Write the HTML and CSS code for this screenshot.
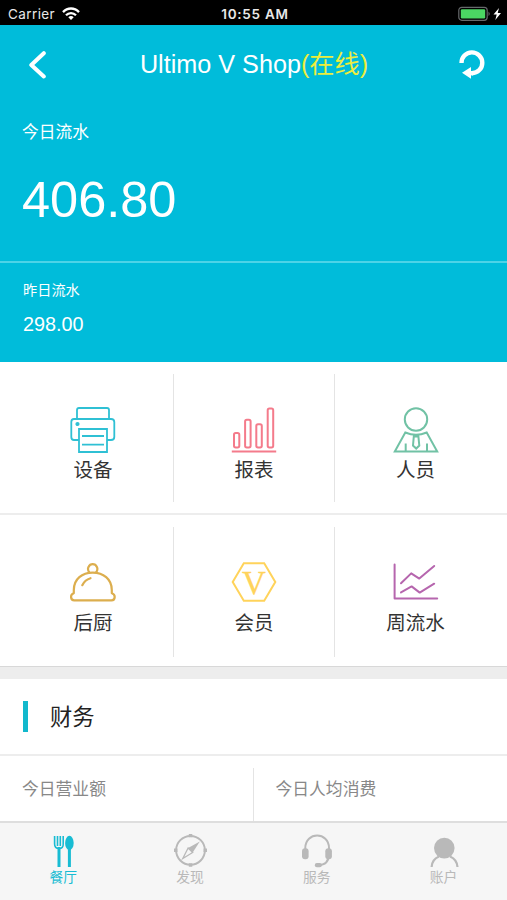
FILE: index.html
```html
<!DOCTYPE html>
<html lang="zh-CN">
<head>
<meta charset="utf-8">
<title>Ultimo V Shop</title>
<link rel="stylesheet" href="styles.css">
</head>
<body>
<div class="app">
  <div class="status">
    <div class="carrier"><span>Carrier</span>
      <svg width="18" height="13" viewBox="0 0 18 13" fill="none" stroke="#fff" stroke-width="2.3"><path d="M1 5.1C5.5.3 12.5.3 17 5.1M4 8.2C6.8 5.3 11.2 5.3 14 8.2"/><path d="M6.3 10.3Q9 7.9 11.7 10.3L9 13Z" fill="#fff" stroke="none"/></svg>
    </div>
    <div class="clock">10:55 AM</div>
    <div class="power">
      <svg width="44" height="16" viewBox="0 0 44 16"><rect x=".8" y="1.3" width="28.4" height="13" rx="3" fill="none" stroke="#66696b" stroke-width="1.2"/><rect x="2.8" y="3.2" width="24.4" height="9.2" rx="1.2" fill="#4bd763"/><path d="M30.5 5.5Q33 7.8 30.5 10Z" fill="#66696b"/><path d="M41 2L35.5 8.5H38.7L37.3 14L43 7H39.7Z" fill="#fff"/></svg>
    </div>
  </div>
  <header class="nav">
    <svg class="back" width="20" height="30" viewBox="0 0 20 30" fill="none" stroke="#fff" stroke-width="4" stroke-linecap="round" stroke-linejoin="round"><path d="M16.8 4.2L4.3 16L16.8 27.5"/></svg>
    <h1>Ultimo V Shop<span>(在线)</span></h1>
    <svg class="refresh" width="28" height="30" viewBox="0 0 28 30"><path d="M3.5 14A10.4 10.4 0 1 1 14 24.2" fill="none" stroke="#fff" stroke-width="4.4"/><path d="M4 23.7L13 18V29.8Z" fill="#fff"/><path d="M12 22H15V26.4H12Z" fill="#fff"/></svg>
  </header>
  <section class="today"><p>今日流水</p><strong>406.80</strong></section>
  <section class="yesterday"><p>昨日流水</p><strong>298.00</strong></section>
  <section class="menu">
    <div class="menu-row">
      <div class="tile"><svg viewBox="0 0 46 46" stroke="#2fc0d4" stroke-width="1.8"><path d="M7 12V3Q7 1 9 1H37Q39 1 39 3V12M9 33H4Q1.3 33 1.3 30V15Q1.3 12 4 12H41Q44.3 12 44.3 15V30Q44.3 33 41 33H37M9 22H37V45H9ZM12 29H34M12 37.6H34"/><circle cx="7.5" cy="17" r="1.2" fill="#2fc0d4"/></svg><span>设备</span></div>
      <div class="tile"><svg viewBox="0 0 46 46" stroke="#f47b8b" stroke-width="2"><rect x="3" y="26" width="5.3" height="14.4" rx="1.7"/><rect x="14.1" y="12.7" width="5.5" height="27.7" rx="1.7"/><rect x="25.3" y="17.2" width="5.5" height="23.2" rx="1.7"/><rect x="36.7" y="1.6" width="5.5" height="38.8" rx="1.7"/><path d="M.8 44.4H45.2"/></svg><span>报表</span></div>
      <div class="tile"><svg viewBox="0 0 46 46" stroke="#71c2a5" stroke-width="2"><circle cx="23" cy="12.5" r="11.2"/><path d="M12.3 25.5Q23 30 33.7 25.5L44.2 44.4H1.8ZM12.7 36.5V44M34 36.5V44M20.8 29.5H25.4L26.3 38.5L23.2 41.5L20 38.5Z"/></svg><span>人员</span></div>
    </div>
    <div class="menu-row">
      <div class="tile"><svg viewBox="0 0 46 46" stroke="#dcae4e" stroke-width="2.2"><path d="M19.4 12.5C16.3 8.8 19 4.2 22.7 4.2S29.1 8.8 26 12.5M3.8 33V30C3.8 18.8 12.3 12.6 22.7 12.6S41.8 18.8 41.8 30V33M3.8 33.2C0 34.2.2 40.3 4.2 40.3H41.5C45.6 40.3 45.8 34.2 41.8 33.2M12.3 25.2Q14.8 19.8 20.5 18.2" stroke-linecap="round"/></svg><span>后厨</span></div>
      <div class="tile"><svg viewBox="0 0 46 46" stroke="#ffd35b" stroke-width="2"><path d="M12.8 3.2H33.2L44.3 22L33.2 40.8H12.8L1.7 22Z"/><text x="23" y="34">V</text></svg><span>会员</span></div>
      <div class="tile"><svg viewBox="0 0 46 46" stroke="#b666ae" stroke-width="2" stroke-linecap="round" stroke-linejoin="round"><path d="M1.6 4.5V38.5H44.2M8 23.3L18.2 13.4L26.3 18.6L41.2 6M8 32.4L18.6 26.4L26.7 32.6L41.2 23.7"/></svg><span>周流水</span></div>
    </div>
  </section>
  <section class="finance">
    <h2><span>财务</span></h2>
    <div class="figures"><div>今日营业额</div><div>今日人均消费</div></div>
  </section>
  <nav class="tabs">
    <div class="tab active"><svg viewBox="0 0 34 34"><path d="M8.6 2V10Q8.6 14.5 13 14.5T17.2 10V2M11.5 2V12M14.3 2V12" fill="none" stroke="currentColor" stroke-width="1.6"/><path d="M11.5 13H14.5V33H11.5ZM21.9 14H24.9V33H21.9Z"/><ellipse cx="23.4" cy="9" rx="4.3" ry="7.2"/></svg><span>餐厅</span></div>
    <div class="tab"><svg viewBox="0 0 34 34"><circle cx="17.5" cy="16.3" r="14.4" fill="none" stroke="currentColor" stroke-width="2"/><path d="M15.8 0H19.3V3.3H15.8ZM15.8 29.3H19.3V32.8H15.8ZM1 14.6H4.5V18.1H1ZM30.5 14.6H34V18.1H30.5Z"/><path d="M26.8 7.6L19.7 18.5L15.1 14Z"/><path d="M15.1 14L19.7 18.5L9.8 24.5Z" fill="none" stroke="currentColor" stroke-width="1.3"/></svg><span>发现</span></div>
    <div class="tab"><svg viewBox="0 0 34 34"><path d="M5.3 16V14C5.3-2.6 29-2.6 29 14V20Q29 31 18 31.2" fill="none" stroke="currentColor" stroke-width="2"/><rect x="2" y="14.3" width="6.6" height="11" rx="3"/><rect x="25.3" y="14.3" width="6.6" height="11" rx="3"/><rect x="14.8" y="29" width="7" height="4.2" rx="2"/></svg><span>服务</span></div>
    <div class="tab"><svg viewBox="0 0 34 34"><circle cx="17.3" cy="14.1" r="10.3"/><path d="M4.6 33Q5 25.5 12 22.5M30.5 33Q30 25.5 23 22.5" fill="none" stroke="currentColor" stroke-width="2.2"/></svg><span>账户</span></div>
  </nav>
</div>
</body>
</html>
```
FILE: styles.css
```css
* { box-sizing: border-box; }
body, h1, h2, p { margin: 0; font-weight: 400; }
body {
  background: #ededed;
  color: #333;
  font-family: "Liberation Sans", "Noto Sans CJK SC", sans-serif;
}
.app { height: 900px; overflow: hidden; display: flex; flex-direction: column; }
svg { display: block; flex: none; }

.status {
  height: 25px;
  flex: none;
  background: #000;
  color: #e8e8e8;
  display: grid;
  grid-template-columns: 1fr auto 1fr;
  align-items: center;
  padding: 2px 5px 0 8px;
  font: 13.5px/20px Inter, sans-serif;
}
.carrier { display: flex; align-items: center; gap: 7px; letter-spacing: .4px; }
.clock { font-weight: 600; letter-spacing: .75px; }
.power { justify-self: end; }

.nav {
  height: 78px;
  flex: none;
  background: #00bcda;
  display: flex;
  align-items: center;
  justify-content: space-between;
  padding: 0 21px 0 27px;
}
.nav h1 { color: #fff; font-size: 25.2px; line-height: 36px; white-space: nowrap; }
.nav h1 span { color: #eded3d; }
.nav .back { margin-right: 3px; }

.today, .yesterday { background: #00bcda; color: #fff; flex: none; }
.today { height: 160px; padding: 17px 22px 0; border-bottom: 2px solid #4dd3e7; }
.today p { font-size: 16.8px; line-height: 25px; }
.today strong { display: block; font-size: 50.5px; line-height: 60px; font-weight: 400; margin-top: 25px; }
.yesterday { height: 99px; padding: 17px 23px 0; }
.yesterday p { font-size: 14.2px; line-height: 20px; }
.yesterday strong { display: block; font-size: 19.8px; line-height: 24px; font-weight: 400; margin-top: 12px; }

.menu { background: #fff; flex: none; height: 305px; border-bottom: 1px solid #d8d8d8; }
.menu-row { height: 153px; padding: 12px 11px 11px 13px; display: grid; grid-template-columns: repeat(3, 1fr); border-bottom: 2px solid #ededed; }
.menu-row:last-child { border-bottom: 0; height: 152px; padding-bottom: 10px; }
.tile { display: flex; flex-direction: column; align-items: center; border-right: 1px solid #e4e4e4; padding-top: 33px; }
.tile:last-child { border-right: 0; }
.tile svg { width: 46px; height: 46px; fill: none; }
.tile text { font: 33px "Liberation Serif", serif; fill: #ffd35b; stroke: #ffd35b; stroke-width: .3; text-anchor: middle; }
.tile span { font-size: 19.5px; line-height: 28px; margin-top: 3px; }

.finance { background: #fff; margin-top: 12px; height: 142px; flex: none; }
.finance h2 { height: 77px; display: flex; align-items: center; padding-left: 23px; border-bottom: 2px solid #ededed; font-size: 22.3px; color: #222; }
.finance h2 span { padding-bottom: 4px; }
.finance h2::before { content: ""; width: 5px; height: 31px; background: #12b8cc; margin-right: 22px; }
.figures { height: 65px; padding-top: 12px; display: grid; grid-template-columns: 1fr 1fr; }
.figures div { padding: 8px 0 0 22px; color: #888; font-size: 16.8px; line-height: 27px; }
.figures div:first-child { border-right: 1px solid #e4e4e4; }

.tabs { flex: 1; background: #f6f6f6; border-top: 2px solid #dedede; display: grid; grid-template-columns: repeat(4, 1fr); }
.tab { color: #b9b9b9; display: flex; flex-direction: column; align-items: center; padding-top: 11px; }
.tab.active { color: #18bcd3; }
.tab svg { width: 34px; height: 34px; fill: currentColor; }
.tab span { font-size: 13.8px; line-height: 20px; }
```
